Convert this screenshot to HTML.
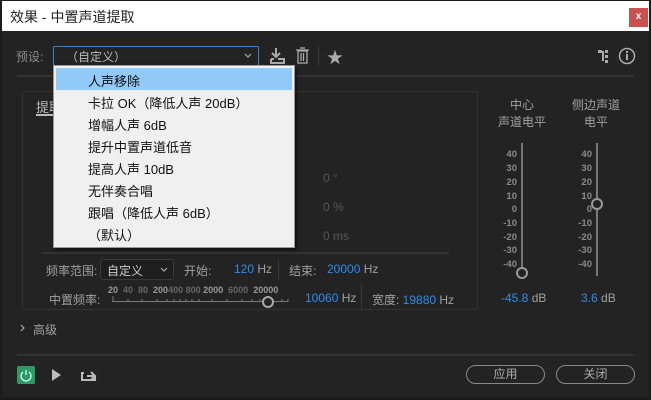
<!DOCTYPE html>
<html><head><meta charset="utf-8"><style>
*{margin:0;padding:0;box-sizing:border-box}
body{width:651px;height:400px;background:#1c1c1c;position:relative;overflow:hidden;font-family:"Liberation Sans","Noto Sans CJK SC",sans-serif;font-size:12px;color:#a0a0a0}
.a{position:absolute;white-space:nowrap}
.b{color:#2d8ceb}
.win{position:absolute;left:2px;top:1px;width:647px;height:396px;background:#232323}
.title{position:absolute;left:2px;top:1px;width:647px;height:30px;background:#fff}
.line{position:absolute;height:2px;background:#333}
.tick{position:absolute;font-size:9.5px;font-weight:bold;color:#8a8a8a;text-align:right;width:20px}
.menu div{position:absolute;left:34px;font-size:13px;color:#111}
</style></head><body>
<div class="win"></div>
<div class="title"></div>
<div class="a" style="left:10px;top:7px;font-size:14px;color:#222">效果 - 中置声道提取</div>
<div class="a" style="left:629px;top:8px;width:19px;height:19px;background:#c9514f;color:#fff;font-size:10px;font-weight:bold;text-align:center;line-height:18px">x</div>

<div class="a" style="left:16px;top:48px;font-size:12px;color:#8a8a8a">预设:</div>
<div class="a" style="left:53px;top:46px;width:206px;height:20px;border:1px solid #3d7fcc;border-radius:2px"></div>
<div class="a" style="left:66px;top:48px;font-size:12px;color:#bbb">（自定义）</div>
<svg class="a" style="left:244px;top:53px" width="8" height="6"><path d="M1 1l3 3 3-3" stroke="#aaa" stroke-width="1.2" fill="none"/></svg>
<svg class="a" style="left:268px;top:46px" width="50" height="20"><path d="M8 2v9M4 7l4 4 4-4M3 13h3M10 13h6v4H3v-4" stroke="#aaa" stroke-width="2" fill="none"/><g stroke="#aaa" fill="none" stroke-width="1.3"><rect x="30" y="5" width="9" height="12"/><path d="M28 4h13M32 2h5M33 7v8M35.5 7v8"/></g></svg>
<div class="a" style="left:318px;top:46px;width:1px;height:20px;background:#3a3a3a"></div>
<div class="a" style="left:327px;top:44px;font-size:16px;color:#aaa">★</div>
<svg class="a" style="left:596px;top:46px" width="40" height="20"><g fill="#aaa"><rect x="2" y="4" width="4" height="3"/><rect x="9" y="4" width="3" height="3"/><rect x="9" y="9" width="3" height="3"/><rect x="9" y="14" width="3" height="3"/><path d="M6 5h2v10H6z"/></g><circle cx="31" cy="10" r="7.5" stroke="#aaa" stroke-width="1.5" fill="none"/><rect x="30" y="8" width="2" height="6" fill="#aaa"/><rect x="30" y="5" width="2" height="2" fill="#aaa"/></svg>
<div class="line" style="left:17px;top:75px;width:617px"></div>

<div class="a" style="left:22px;top:91px;width:456px;height:219px;border:1px solid #333;border-radius:3px"></div>
<div class="a" style="left:36px;top:97px;font-size:13px;color:#bbb">提取</div>
<div class="a" style="left:36px;top:114px;width:20px;height:2px;background:#bbb"></div>
<div class="a" style="left:323px;top:171px;color:#555">0 °</div>
<div class="a" style="left:323px;top:200px;color:#555">0 %</div>
<div class="a" style="left:323px;top:229px;color:#555">0 ms</div>
<div class="line" style="left:42px;top:252px;width:407px"></div>

<div class="a" style="left:46px;top:262px">频率范围:</div>
<div class="a" style="left:100px;top:259px;width:74px;height:21px;border:1px solid #3a3a3a;border-radius:3px;background:#1e1e1e"></div>
<div class="a" style="left:107px;top:262px;color:#ccc">自定义</div>
<svg class="a" style="left:160px;top:267px" width="8" height="6"><path d="M1 1l3 3 3-3" stroke="#aaa" stroke-width="1.2" fill="none"/></svg>
<div class="a" style="left:184px;top:262px">开始:</div>
<div class="a" style="left:234px;top:262px"><span class="b">120</span> Hz</div>
<div class="a" style="left:278px;top:259px;width:1px;height:20px;background:#3a3a3a"></div>
<div class="a" style="left:289px;top:262px">结束:</div>
<div class="a" style="left:327px;top:262px"><span class="b">20000</span> Hz</div>

<div class="a" style="left:49px;top:291px">中置频率:</div>
<div class="a" style="left:108px;top:285px;font-size:9px;font-weight:bold;color:#999">20 <span style="color:#666">&nbsp;40 &nbsp;80</span> &nbsp;200<span style="color:#666">400 800</span> 2000 <span style="color:#666">&nbsp;6000</span> &nbsp;20000</div>
<div class="a" style="left:112px;top:301px;width:176px;height:1px;background:#777"></div>
<svg class="a" style="left:112px;top:296px" width="180" height="6"><path d="M1 0v6M16 3v3M30 3v3M45 3v3M55 3v3M62 3v3M68 3v3M74 3v3M80 3v3M87 3v3M100 3v3M115 3v3M130 3v3M140 3v3M148 3v3M155 3v3M161 3v3M170 3v3M176 3v3" stroke="#777"/></svg>
<div class="a" style="left:262px;top:296px;width:12px;height:12px;border:2px solid #aaa;border-radius:50%;background:#232323"></div>
<div class="a" style="left:305px;top:291px"><span class="b">10060</span> Hz</div>
<div class="a" style="left:361px;top:285px;width:1px;height:24px;background:#3a3a3a"></div>
<div class="a" style="left:372px;top:291px">宽度: <span class="b">19880</span> Hz</div>

<svg class="a" style="left:20px;top:324px" width="6" height="8"><path d="M1 1l3 3-3 3" stroke="#aaa" stroke-width="1.2" fill="none"/></svg>
<div class="a" style="left:33px;top:321px;font-size:12px">高级</div>
<div class="line" style="left:17px;top:354px;width:617px"></div>

<div class="a" style="left:17px;top:366px;width:18px;height:18px;background:#2e9a63;border-radius:2px"></div>
<svg class="a" style="left:17px;top:366px" width="18" height="18"><path d="M6 6a5 5 0 1 0 6 0M9 4v5" stroke="#cfe" stroke-width="1.3" fill="none"/></svg>
<svg class="a" style="left:50px;top:367px" width="50" height="16"><path d="M2 2l9 6-9 6z" fill="#bbb"/><path d="M34 6h-2v7h13v-4" stroke="#bbb" stroke-width="2" fill="none"/><path d="M37 9h7M41 5l4 4-4 4" stroke="#bbb" stroke-width="2" fill="none"/></svg>
<div class="a" style="left:466px;top:365px;width:79px;height:19px;border:1.5px solid #888;border-radius:10px;text-align:center;line-height:16px;color:#aaa">应用</div>
<div class="a" style="left:556px;top:365px;width:79px;height:19px;border:1.5px solid #888;border-radius:10px;text-align:center;line-height:16px;color:#aaa">关闭</div>

<div class="a" style="left:492px;top:97px;width:60px;text-align:center;line-height:17px;font-size:12px">中心<br>声道电平</div>
<div class="a" style="left:566px;top:97px;width:60px;text-align:center;line-height:17px;font-size:12px">侧边声道<br>电平</div>
<div class="a" style="left:521px;top:143px;width:2px;height:133px;background:#777"></div>
<div class="a" style="left:596px;top:143px;width:2px;height:133px;background:#777"></div>
<div class="a" style="left:516px;top:267px;width:12px;height:12px;border:2px solid #999;border-radius:50%;background:#232323"></div>
<div class="a" style="left:591px;top:198px;width:12px;height:12px;border:2px solid #999;border-radius:50%;background:#232323"></div>
<div class="tick" style="left:497px;top:149px">40</div><div class="tick" style="left:497px;top:163px">30</div><div class="tick" style="left:497px;top:177px">20</div><div class="tick" style="left:497px;top:191px">10</div><div class="tick" style="left:497px;top:204px">0</div><div class="tick" style="left:497px;top:218px">-10</div><div class="tick" style="left:497px;top:232px">-20</div><div class="tick" style="left:497px;top:245px">-30</div><div class="tick" style="left:497px;top:259px">-40</div>
<div class="tick" style="left:572px;top:149px">40</div><div class="tick" style="left:572px;top:163px">30</div><div class="tick" style="left:572px;top:177px">20</div><div class="tick" style="left:572px;top:191px">10</div><div class="tick" style="left:572px;top:204px">0</div><div class="tick" style="left:572px;top:218px">-10</div><div class="tick" style="left:572px;top:232px">-20</div><div class="tick" style="left:572px;top:245px">-30</div><div class="tick" style="left:572px;top:259px">-40</div>
<div class="a" style="left:501px;top:291px"><span class="b">-45.8</span> dB</div>
<div class="a" style="left:581px;top:291px"><span class="b">3.6</span> dB</div>

<div class="a menu" style="left:53px;top:65px;width:242px;height:183px;background:#f0f0f0;border:1px solid #999;box-shadow:2px 2px 3px rgba(0,0,0,.5)">
<div style="left:2px;top:2px;width:236px;height:22px;background:#91c9f7"></div>
<div style="top:5px">人声移除</div>
<div style="top:27px">卡拉 OK（降低人声 20dB）</div>
<div style="top:49px">增幅人声 6dB</div>
<div style="top:71px">提升中置声道低音</div>
<div style="top:93px">提高人声 10dB</div>
<div style="top:115px">无伴奏合唱</div>
<div style="top:137px">跟唱（降低人声 6dB）</div>
<div style="top:159px;left:34px">（默认）</div>
</div>
</body></html>
